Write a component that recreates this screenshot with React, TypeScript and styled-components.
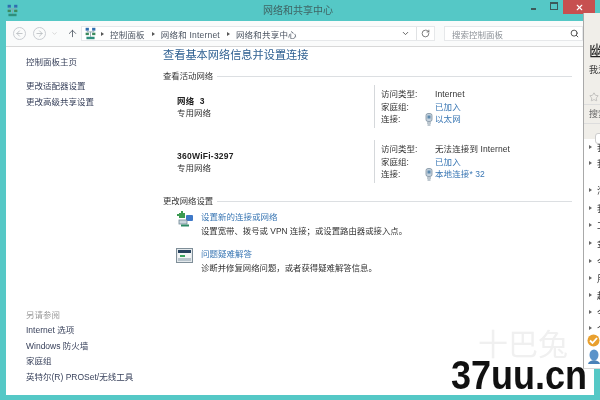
import styled, { createGlobalStyle } from 'styled-components'
import { ArrowLeft, ArrowRight, ArrowUp, ChevronDown, RotateCw, Search, Star, X } from 'lucide-react'

const GlobalStyle = createGlobalStyle`
  html, body {
    margin: 0;
    padding: 0;
    background: #fff;
  }
  body {
    font-family: 'Liberation Sans', 'Noto Sans CJK SC', sans-serif;
  }
`

const NetworkGlyph = ({ size = 16 }: { size?: number }) => (
  <svg width={size} height={size} viewBox="0 0 16 16">
    <rect x="2" y="1" width="4" height="3.5" fill="#2f6db0" />
    <rect x="10" y="1" width="4" height="3.5" fill="#2f6db0" />
    <rect x="2" y="7" width="4" height="3" fill="#3c8a5c" />
    <rect x="10" y="7" width="4" height="3" fill="#3c8a5c" />
    <path d="M4 4.5V6h8V4.5M8 6v6" stroke="#8aa0a8" strokeWidth="1" fill="none" />
    <rect x="3" y="12" width="10" height="3" fill="#2e8f7c" />
  </svg>
)

const BulbGlyph = () => (
  <svg width="8" height="13" viewBox="0 0 8 13">
    <rect x="1" y="0.5" width="6" height="8" rx="2" fill="#c3d0dc" stroke="#7d909f" strokeWidth="0.8" />
    <rect x="2.5" y="2.5" width="3" height="3" fill="#5d89ad" />
    <path d="M2 10h4M2.5 12h3" stroke="#7d909f" strokeWidth="1.2" />
  </svg>
)

const SetupGlyph = () => (
  <svg width="18" height="16" viewBox="0 0 18 16">
    <rect x="3" y="2" width="6" height="5" fill="#3d9a52" />
    <path d="M1 4h3M6 0v3" stroke="#3d9a52" strokeWidth="2" />
    <rect x="10" y="4" width="7" height="6" rx="1" fill="#3f79c8" />
    <rect x="3" y="9" width="8" height="4" fill="#c9d6de" stroke="#6f8795" strokeWidth="0.8" />
    <path d="M5 14.5h8" stroke="#2f8a66" strokeWidth="2" />
  </svg>
)

const TroubleGlyph = () => (
  <svg width="17" height="15" viewBox="0 0 17 15">
    <rect x="0.5" y="0.5" width="16" height="14" fill="#e4e9ec" stroke="#7f8e98" />
    <rect x="2" y="2" width="13" height="3" fill="#26425e" />
    <rect x="2" y="5" width="13" height="5" fill="#f4f6f7" />
    <path d="M4 8h5" stroke="#39a35e" strokeWidth="2" />
    <rect x="2" y="10" width="13" height="3" fill="#b8c4cc" />
  </svg>
)

const details = [
  { name: '网络  3', access: 'Internet', conn: '以太网' },
  { name: '360WiFi-3297', access: '无法连接到 Internet', conn: '本地连接* 32' },
]

const panelRows = [
  { ch: '我', h: 16, gap: 0 },
  { ch: '我', h: 16, gap: 0 },
  { ch: '淘', h: 16, gap: 11 },
  { ch: '我', h: 16, gap: 2 },
  { ch: '工', h: 16, gap: 1 },
  { ch: '金', h: 16, gap: 2 },
  { ch: '今', h: 16, gap: 2 },
  { ch: '用', h: 16, gap: 1 },
  { ch: '超', h: 16, gap: 1 },
  { ch: '今', h: 16, gap: 1 },
  { ch: '个', h: 10, gap: 3 },
]

export default function App() {
  return (
    <>
      <GlobalStyle />
      <Page>
        <TitleBar>
          <AppIcon>
            <NetworkGlyph size={13} />
          </AppIcon>
          <TitleText>网络和共享中心</TitleText>
          <WindowButtons>
            <MinButton />
            <MaxButton />
            <CloseButton>
              <X size={9} strokeWidth={3} color="#fff" />
            </CloseButton>
          </WindowButtons>
        </TitleBar>

        <Client>
          <Toolbar>
            <NavCircle><ArrowLeft size={9} strokeWidth={2} /></NavCircle>
            <NavCircle><ArrowRight size={9} strokeWidth={2} /></NavCircle>
            <NavDown><ChevronDown size={7} /></NavDown>
            <UpButton><ArrowUp size={11} strokeWidth={1.8} /></UpButton>
            <AddressBar>
              <NetworkGlyph size={13} />
              <Crumb>控制面板</Crumb>
              <Crumb>网络和 Internet</Crumb>
              <Crumb>网络和共享中心</Crumb>
              <AddressEnd>
                <ChevronDown size={9} strokeWidth={2.4} />
              </AddressEnd>
              <RefreshBox><RotateCw size={9} /></RefreshBox>
            </AddressBar>
            <SearchBox>
              搜索控制面板
              <Search size={9} strokeWidth={2.4} color="#444" />
            </SearchBox>
          </Toolbar>

          <Body>
            <Sidebar>
              <SideGroup>
                <SideLink>控制面板主页</SideLink>
                <SideSpacer />
                <SideLink>更改适配器设置</SideLink>
                <SideLink>更改高级共享设置</SideLink>
              </SideGroup>
              <SideGroup>
                <SideLink $muted>另请参阅</SideLink>
                <SideLink>Internet 选项</SideLink>
                <SideLink>Windows 防火墙</SideLink>
                <SideLink>家庭组</SideLink>
                <SideLink>英特尔(R) PROSet/无线工具</SideLink>
              </SideGroup>
            </Sidebar>

            <Main>
              <Heading>查看基本网络信息并设置连接</Heading>
              <SectionHead $top={7}>查看活动网络</SectionHead>
              <Networks>
                {details.map((d) => (
                  <NetworkRow key={d.name}>
                    <NetworkName>
                      <strong>{d.name}</strong>
                      <span>专用网络</span>
                    </NetworkName>
                    <NetworkInfo>
                      <InfoLabel>访问类型:</InfoLabel>
                      <InfoValue>{d.access}</InfoValue>
                      <InfoLabel>家庭组:</InfoLabel>
                      <InfoValue $link>已加入</InfoValue>
                      <InfoLabel>连接:</InfoLabel>
                      <InfoValue $link>
                        <ConnIcon><BulbGlyph /></ConnIcon>
                        {d.conn}
                      </InfoValue>
                    </NetworkInfo>
                  </NetworkRow>
                ))}
              </Networks>
              <SectionHead $top={12}>更改网络设置</SectionHead>
              <Task $top={3}>
                <TaskIcon><SetupGlyph /></TaskIcon>
                <div>
                  <TaskLink>设置新的连接或网络</TaskLink>
                  <TaskText>设置宽带、拨号或 VPN 连接；或设置路由器或接入点。</TaskText>
                </div>
              </Task>
              <Task $top={9}>
                <TaskIcon><TroubleGlyph /></TaskIcon>
                <div>
                  <TaskLink>问题疑难解答</TaskLink>
                  <TaskText>诊断并修复网络问题，或者获得疑难解答信息。</TaskText>
                </div>
              </Task>
            </Main>
          </Body>
        </Client>

        <SidePanel>
          <PanelTitle>幽</PanelTitle>
          <PanelSub>我爱</PanelSub>
          <PanelStar><Star size={10} strokeWidth={1.2} color="#999" /></PanelStar>
          <PanelSearch>搜索</PanelSearch>
          <PanelPill />
          <PanelList>
            {panelRows.map((r, i) => (
              <PanelRow key={i} $h={r.h} $gap={r.gap}>
                <Arrow />
                {r.ch}
              </PanelRow>
            ))}
          </PanelList>
          <PanelFoot>
            <svg width="13" height="13" viewBox="0 0 13 13">
              <circle cx="6.5" cy="6.5" r="6" fill="#e9a02e" />
              <path d="M3 6.5l2.5 2.5L10 4" stroke="#fff" strokeWidth="1.8" fill="none" />
            </svg>
          </PanelFoot>
          <PanelFoot>
            <svg width="14" height="16" viewBox="0 0 14 16">
              <ellipse cx="7" cy="6" rx="4.5" ry="5.5" fill="#5b93c9" />
              <path d="M1 15c1-5 11-5 12 0z" fill="#4a82b8" />
            </svg>
          </PanelFoot>
        </SidePanel>

        <Watermark>十巴兔</Watermark>
        <Brand>37uu.cn</Brand>
      </Page>
    </>
  )
}

const Page = styled.div`
  position: relative;
  width: 600px;
  height: 400px;
  overflow: hidden;
  display: flex;
  flex-direction: column;
  background: #55c8c6;
  filter: blur(0.35px);
`

const TitleBar = styled.div`
  position: relative;
  height: 21px;
  flex: none;
  display: flex;
  align-items: center;
`

const AppIcon = styled.div`
  display: flex;
  margin-left: 6px;
`

const TitleText = styled.div`
  position: absolute;
  left: 263px;
  top: 3px;
  font-size: 10px;
  line-height: 15px;
  color: #3f6464;
`

const WindowButtons = styled.div`
  margin-left: auto;
  margin-right: 5px;
  align-self: flex-start;
  display: flex;
  align-items: center;
  height: 14px;
`

const MinButton = styled.div`
  width: 5px;
  height: 2px;
  margin: 4px 14px 0 0;
  background: #3c5a5a;
`

const MaxButton = styled.div`
  width: 6px;
  height: 5px;
  margin: -2px 5px 0 0;
  border: 1px solid #3c5a5a;
  border-top-width: 2px;
`

const CloseButton = styled.div`
  width: 32px;
  height: 14px;
  background: #c75050;
  display: flex;
  align-items: center;
  justify-content: center;
`

const Client = styled.div`
  flex: 1;
  margin: 0 6px 5px;
  background: #fff;
  display: flex;
  flex-direction: column;
  min-height: 0;
`

const Toolbar = styled.div`
  height: 25px;
  flex: none;
  display: flex;
  align-items: center;
  border-bottom: 1px solid #d8d8d8;
  background: #fafbfb;
  color: #8a9097;
  font-size: 8.5px;
`

const NavCircle = styled.div`
  width: 11px;
  height: 11px;
  margin-left: 7px;
  border: 1px solid #c9cdd2;
  border-radius: 50%;
  display: flex;
  align-items: center;
  justify-content: center;
  color: #b0b5ba;
  & + & {
    margin-left: 7px;
  }
`

const NavDown = styled.div`
  display: flex;
  margin-left: 5px;
  color: #c0c0c0;
`

const UpButton = styled.div`
  display: flex;
  margin-left: 9px;
  color: #4c5560;
`

const AddressBar = styled.div`
  width: 354px;
  height: 15px;
  margin-left: 3px;
  padding-left: 2px;
  box-sizing: border-box;
  display: flex;
  align-items: center;
  background: #fff;
  border: 1px solid #e6e8ea;
  color: #4a5360;
`

const Crumb = styled.span`
  display: flex;
  align-items: center;
  margin-left: 4px;
  letter-spacing: 0.2px;
  white-space: nowrap;
  & + & {
    margin-left: 7px;
  }
  &::before {
    content: '';
    margin-right: 6px;
    border-left: 3px solid #555;
    border-top: 2px solid transparent;
    border-bottom: 2px solid transparent;
  }
`

const AddressEnd = styled.div`
  margin-left: auto;
  margin-right: 6px;
  display: flex;
  color: #555;
`

const RefreshBox = styled.div`
  width: 17px;
  height: 100%;
  border-left: 1px solid #e0e2e4;
  display: flex;
  align-items: center;
  justify-content: center;
  color: #555;
`

const SearchBox = styled.div`
  width: 139px;
  height: 15px;
  margin-left: 9px;
  padding: 0 3px 0 7px;
  box-sizing: border-box;
  display: flex;
  align-items: center;
  justify-content: space-between;
  background: #fff;
  border: 1px solid #e6e8ea;
  color: #8d9298;
`

const Body = styled.div`
  flex: 1;
  min-height: 0;
  display: flex;
  background: #fff;
`

const Sidebar = styled.div`
  width: 157px;
  flex: none;
  box-sizing: border-box;
  padding: 8px 0 10px 20px;
  display: flex;
  flex-direction: column;
  justify-content: space-between;
`

const SideGroup = styled.div`
  display: flex;
  flex-direction: column;
`

const SideSpacer = styled.div`
  height: 9px;
`

const SideLink = styled.div<{ $muted?: boolean }>`
  font-size: 8.5px;
  line-height: 15.4px;
  white-space: nowrap;
  color: ${(p) => (p.$muted ? '#9a9a9a' : '#39425c')};
`

const Main = styled.div`
  flex: 1;
  min-width: 0;
  padding-right: 22px;
`

const Heading = styled.div`
  font-size: 11.2px;
  line-height: 16px;
  color: #2d5f91;
  white-space: nowrap;
`

const SectionHead = styled.div<{ $top: number }>`
  margin-top: ${(p) => p.$top}px;
  display: flex;
  align-items: center;
  font-size: 8.4px;
  line-height: 12px;
  color: #333;
  &::after {
    content: '';
    flex: 1;
    margin-left: 4px;
    border-top: 1px solid #dcdfe2;
  }
`

const Networks = styled.div`
  margin-top: 3px;
  display: flex;
  flex-direction: column;
  gap: 12px;
`

const NetworkRow = styled.div`
  height: 43px;
  display: flex;
  align-items: stretch;
`

const NetworkName = styled.div`
  width: 197px;
  padding-left: 14px;
  flex: none;
  display: flex;
  flex-direction: column;
  justify-content: center;
  font-size: 8.5px;
  line-height: 12px;
  color: #333;
  strong {
    color: #222;
    white-space: pre;
    letter-spacing: 0.25px;
  }
`

const NetworkInfo = styled.div`
  border-left: 1px solid #d5d8db;
  padding: 3px 0 0 6px;
  display: grid;
  grid-template-columns: 54px 1fr;
  grid-auto-rows: 12.5px;
  font-size: 8.5px;
  line-height: 12.5px;
  color: #333;
`

const InfoLabel = styled.div``

const InfoValue = styled.div<{ $link?: boolean }>`
  position: relative;
  white-space: nowrap;
  letter-spacing: 0.1px;
  color: ${(p) => (p.$link ? '#3a77b4' : '#333')};
`

const ConnIcon = styled.span`
  position: absolute;
  left: -10px;
  top: 0;
  display: flex;
`

const Task = styled.div<{ $top: number }>`
  margin-top: ${(p) => p.$top}px;
  display: flex;
`

const TaskIcon = styled.div`
  width: 25px;
  margin-left: 13px;
  flex: none;
  padding-top: 1px;
`

const TaskLink = styled.div`
  font-size: 8.5px;
  line-height: 14px;
  color: #3a77b4;
`

const TaskText = styled.div`
  font-size: 8.4px;
  line-height: 14px;
  color: #333;
  white-space: nowrap;
`

const SidePanel = styled.div`
  position: absolute;
  left: 583px;
  top: 13px;
  width: 30px;
  height: 356px;
  box-sizing: border-box;
  border-left: 1px solid #a9a9a9;
  border-bottom: 1px solid #d8d8d8;
  background: #fff;
  display: flex;
  flex-direction: column;
  overflow: hidden;
`

const PanelTitle = styled.div`
  padding: 29px 0 0 5px;
  height: 20px;
  background: #f0eee9;
  font-size: 16px;
  line-height: 20px;
  color: #222;
`

const PanelSub = styled.div`
  padding: 3px 0 0 5px;
  height: 13px;
  background: #f0eee9;
  font-size: 9px;
  line-height: 11px;
  color: #333;
  white-space: nowrap;
`

const PanelStar = styled.div`
  height: 16px;
  padding: 10px 0 0 5px;
  background: #f0eee9;
  border-bottom: 1px solid #ddd;
`

const PanelSearch = styled.div`
  height: 18px;
  padding-left: 5px;
  background: #f0eee9;
  border-bottom: 1px solid #ddd;
  font-size: 9px;
  line-height: 18px;
  color: #666;
  white-space: nowrap;
`

const PanelPill = styled.div`
  height: 15px;
  background: #f0eee9;
  &::after {
    content: '';
    display: block;
    width: 20px;
    height: 9px;
    margin: 0 0 0 11px;
    position: relative;
    top: 9px;
    background: #fff;
    border: 1px solid #ccc;
    border-radius: 3px;
  }
`

const PanelList = styled.div`
  display: flex;
  flex-direction: column;
`

const PanelRow = styled.div<{ $h: number; $gap: number }>`
  height: ${(p) => p.$h}px;
  margin-top: ${(p) => p.$gap}px;
  display: flex;
  align-items: center;
  padding-left: 5px;
  font-size: 9px;
  color: #333;
`

const Arrow = styled.span`
  margin-right: 5px;
  border-left: 3px solid #666;
  border-top: 2.5px solid transparent;
  border-bottom: 2.5px solid transparent;
`

const PanelFoot = styled.div`
  padding-left: 3px;
  height: 16px;
`

const Watermark = styled.div`
  position: absolute;
  left: 478px;
  top: 330px;
  font-size: 30px;
  line-height: 30px;
  color: #f0f0f0;
  white-space: nowrap;
`

const Brand = styled.div`
  position: absolute;
  left: 451px;
  top: 360px;
  font-size: 40px;
  line-height: 30px;
  font-weight: 700;
  color: #111;
  white-space: nowrap;
  transform: scaleX(0.9);
  transform-origin: left center;
`
